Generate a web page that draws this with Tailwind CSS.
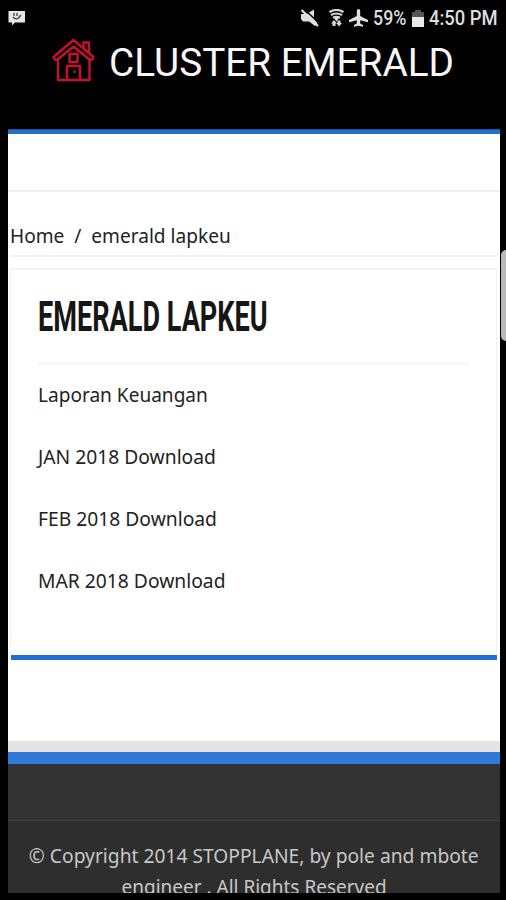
<!DOCTYPE html>
<html lang="id">
<head>
  <meta charset="UTF-8" />
  <meta name="viewport" content="width=device-width, initial-scale=1" />
  <title>Cluster Emerald</title>
  <script src="https://cdn.jsdelivr.net/npm/@tailwindcss/browser@4"></script>
</head>
<body class="relative bg-black h-[900px] overflow-hidden font-['Noto_Sans',sans-serif] text-[#222]">

  <!-- Status bar -->
  <div class="h-9 flex items-center justify-between pl-2 pr-2 font-[Roboto,sans-serif] font-medium text-[#dedede]">
    <svg class="w-[18px] h-4" viewBox="0 0 18 16">
      <path d="M.5 1h16.500v11.500H7L4 15.500v-3H.5z" fill="#e6e6e6" />
      <path d="M6 3v3M9 3v3M5 7q3 3.500 6 .5l2-2.500" fill="none" stroke="#444" stroke-width="1.4" />
    </svg>
    <div class="flex items-center h-9">
      <svg class="w-[18px] h-[18px] mr-2.5" viewBox="0 0 18 18">
        <path d="M0 5h5.500L13 .5v9l3.500 5-2.500 2.500-6-4.500H2L0 10z" fill="#e0e0e0" />
        <path d="M3 0l15 14" stroke="#000" stroke-width="1.5" />
        <path d="M.5 1l16.500 16" stroke="#e0e0e0" stroke-width="2.2" />
      </svg>
      <svg class="w-4 h-[18px] mr-1" viewBox="0 0 16 18">
        <path d="M.5 3q7-4 14 0M2 6q5.500-3 11 0M4 8.800q3.500-2 7 0" fill="none" stroke="#d8d8d8" stroke-width="2.200" />
        <path d="M5 9h5l-2.500 3.500zM2 14.500l3-3.500 3 3.500H6.500V17h-3v-2.500zM8.500 11.500h3V14H13l-3 3.500L7.500 14h1z" fill="#d8d8d8" />
      </svg>
      <svg class="w-[19px] h-[18px] mr-[5px]" viewBox="0 0 19 18">
        <path d="M9.500 0q1.700 0 1.700 2v5l7.800 4v2.300l-7.800-2V14.500l2.800 1.500v1.700l-4.500-1-4.500 1V16l2.800-1.500v-3.200L0 13.300V11l7.800-4V2q0-2 1.700-2z" fill="#e0e0e0" />
      </svg>
      <div class="w-[39px] h-7"><span class="inline-block origin-left whitespace-nowrap text-[21px] leading-[29px] scale-x-[.85]">59%</span></div>
      <svg class="w-3 h-[17px] mr-[5px]" viewBox="0 0 12 17">
        <path d="M3 0h6v2h3v5H0V2h3z" fill="#555" />
        <path d="M0 7h12v10H0z" fill="#e8e8e8" />
      </svg>
      <div class="w-[69px] h-7"><span class="inline-block origin-left whitespace-nowrap text-[21px] leading-[29px] scale-x-[.875]">4:50 PM</span></div>
    </div>
  </div>

  <!-- App header -->
  <header class="h-[93px] flex pl-[52px]">
    <svg class="w-11 h-11 mt-0.5" viewBox="0 0 44 44" fill="none" stroke="#c8102e" stroke-width="2.4" stroke-linejoin="round">
      <path d="M6 20v22h31.500V20" />
      <path d="M21.500 2L2 18.500q-1 2 1 3l2 .500L21.500 8.500 38 22l2-.500q2-1 1-3z" />
      <path d="M31.500 9.500V4.500h5.500v10" />
      <path d="M17.500 16h8v8h-8zM15 42V28h13v14" />
      <path d="M22.500 32v3" stroke-width="2" />
    </svg>
    <h1 class="ml-[13px] mt-px h-[52px] origin-left whitespace-nowrap font-[Roboto,sans-serif] text-[39px] leading-[52px] text-[#f7f7f7] scale-x-[.993]">CLUSTER EMERALD</h1>
  </header>

  <!-- Page -->
  <div class="ml-[8px] w-[492px] h-[764px] overflow-hidden bg-white">
    <div class="h-[5px] bg-[#1f70d0] border-t border-[#17529a]"></div>
    <div class="h-[58px] border-b-2 border-[#efefef]"></div>

    <nav class="h-[65px] ml-[2px] mr-[3px] pt-[30px] border-b-2 border-[#f3f3f3]">
      <p class="inline-block origin-left whitespace-pre text-[20px] leading-[28px] scale-x-[.955]">Home  /  emerald lapkeu</p>
    </nav>

    <article class="mt-[11px] ml-[2px] mr-[3px] h-[387px] pl-[27px] pr-[26px] border-x border-t-2 border-[#f2f2f2]">
      <h2 class="mt-[19px] h-[54px] origin-left whitespace-nowrap font-[Roboto,sans-serif] font-bold text-[43px] leading-[54px] text-[#161616] w-max scale-x-[.63]">EMERALD LAPKEU</h2>
      <hr class="mt-[19px] border-t-[3px] border-[#f7f7f7]" />
      <div class="mt-[16px] flex flex-col gap-[34px] text-[20px] leading-[28px]">
        <p class="w-max origin-left scale-x-[.953]">Laporan Keuangan</p>
        <p class="w-max origin-left scale-x-[.963]">JAN 2018 Download</p>
        <p class="w-max origin-left scale-x-[.963]">FEB 2018 Download</p>
        <p class="w-max origin-left scale-x-[.963]">MAR 2018 Download</p>
      </div>
    </article>
    <div class="ml-[3px] mr-[3px] h-[5px] bg-[#1f70d0]"></div>

    <div class="mt-[81px] h-[11px] bg-[#e4e4e5]"></div>
    <footer class="h-[150px] bg-[#2e2e2e] border-t-[12px] border-[#3079d8] text-[#c8c8c8]">
      <div class="h-[57px] bg-[#333] border-b border-[#444]"></div>
      <div class="pt-[19px] flex flex-col items-center text-[20.5px] leading-[31px] whitespace-nowrap">
        <p class="scale-x-[.938]">© Copyright 2014 STOPPLANE, by pole and mbote</p>
        <p class="scale-x-[.926]">engineer . All Rights Reserved</p>
      </div>
    </footer>
  </div>

  <!-- Edge panel handle -->
  <div class="absolute top-[250px] right-0 w-[5px] h-[91px] rounded-l-[5px] bg-[#b9b9b9]"></div>
</body>
</html>
